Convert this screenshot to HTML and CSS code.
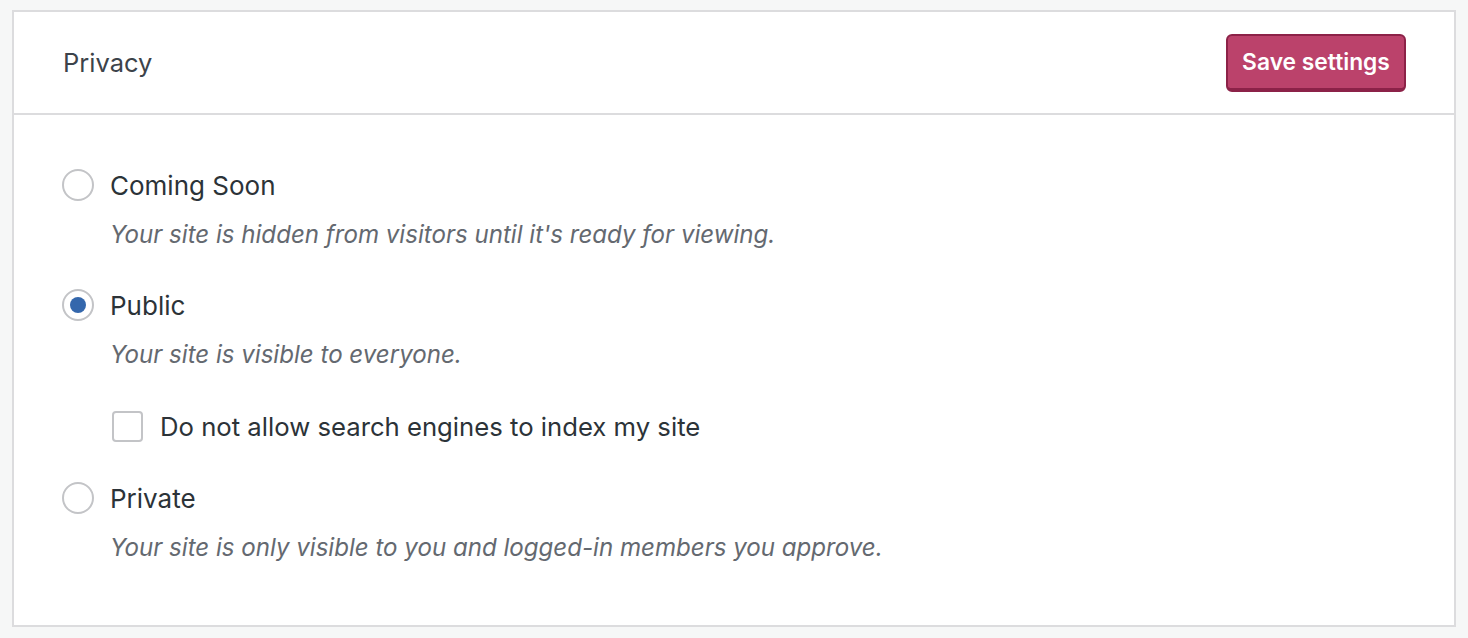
FILE: index.html
```html
<!DOCTYPE html>
<html>
<head>
<meta charset="utf-8">
<link rel="stylesheet" href="styles.css">
</head>
<body>
<div class="card">
  <div class="card-header">
    <div class="title">Privacy</div>
    <button class="btn-primary">Save settings</button>
  </div>
  <div class="card-body">
    <div class="option">
      <label class="opt-row"><span class="radio"></span><span class="opt-label">Coming Soon</span></label>
      <p class="desc">Your site is hidden from visitors until it's ready for viewing.</p>
    </div>
    <div class="option">
      <label class="opt-row"><span class="radio checked"></span><span class="opt-label">Public</span></label>
      <p class="desc">Your site is visible to everyone.</p>
      <label class="check-row"><span class="checkbox"></span><span class="opt-label check-label">Do not allow search engines to index my site</span></label>
    </div>
    <div class="option">
      <label class="opt-row"><span class="radio"></span><span class="opt-label">Private</span></label>
      <p class="desc">Your site is only visible to you and logged-in members you approve.</p>
    </div>
  </div>
</div>
</body>
</html>
```
FILE: styles.css
```css
html, body {
  margin: 0;
  padding: 0;
  background: #f6f7f7;
  font-family: Inter, "Noto Sans", "Liberation Sans", sans-serif;
  color: #2c3338;
}
.card {
  margin: 10px 12px 0 12px;
  width: 1440px;
  background: #fff;
  border: 2px solid #dcdcde;
}
.card-header {
  height: 101px;
  border-bottom: 2px solid #dcdcde;
  display: flex;
  align-items: center;
  justify-content: space-between;
  padding: 0 48px 0 49px;
}
.title {
  font-size: 25.5px;
  color: #3c434a;
}
.btn-primary {
  width: 180px;
  height: 58px;
  background: #bb426b;
  border: 2px solid #8c2248;
  border-bottom-width: 4px;
  border-radius: 6px;
  color: #fff;
  font-family: Inter, "Noto Sans", sans-serif;
  font-weight: 600;
  font-size: 22.8px;
  padding: 0;
}
.card-body {
  padding: 52px 48px 61px 48px;
}
.option + .option {
  margin-top: 36px;
}
.opt-row, .check-row {
  display: flex;
  align-items: center;
  height: 36px;
}
.radio {
  width: 28px;
  height: 28px;
  border: 2px solid #c3c4c7;
  border-radius: 50%;
  margin-right: 16px;
  display: flex;
  align-items: center;
  justify-content: center;
  box-sizing: content-box;
}
.radio.checked::after {
  content: "";
  width: 16px;
  height: 16px;
  border-radius: 50%;
  background: #3467ac;
}
.opt-label {
  font-size: 26px;
  color: #2c3338;
}
.check-label {
  font-size: 25.7px;
}
.desc {
  margin: 16px 0 0 48px;
  line-height: 32px;
  font-size: 24.1px;
  font-style: italic;
  color: #646970;
}
.check-row {
  margin: 37px 0 0 50px;
}
.checkbox {
  width: 27px;
  height: 27px;
  border: 2px solid #c3c4c7;
  border-radius: 4px;
  margin-right: 17px;
}
```
